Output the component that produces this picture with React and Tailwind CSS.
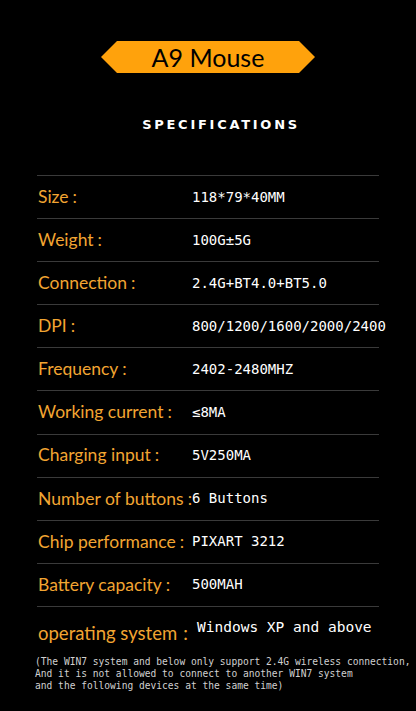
import React from 'react';

const specs = [
    { label: 'Size', value: '118*79*40MM' },
    { label: 'Weight', value: '100G±5G' },
    { label: 'Connection', value: '2.4G+BT4.0+BT5.0' },
    { label: 'DPI', value: '800/1200/1600/2000/2400' },
    { label: 'Frequency', value: '2402-2480MHZ' },
    { label: 'Working current', value: '≤8MA' },
    { label: 'Charging input', value: '5V250MA' },
    { label: 'Number of buttons', value: '6 Buttons' },
    { label: 'Chip performance', value: 'PIXART 3212' },
    { label: 'Battery capacity', value: '500MAH' },
];

export default function App() {
    return (
        <div className="w-[416px] h-[711px] bg-black overflow-hidden">
            <div className="pt-[41px] flex justify-center">
                <div className="w-[214px] h-[32px] bg-[#ffa20c] flex items-center justify-center [clip-path:polygon(16px_0,198px_0,100%_50%,198px_100%,16px_100%,0_50%)]">
                    <span className="text-[25px] leading-none text-black font-['Lato',sans-serif]">A9 Mouse</span>
                </div>
            </div>

            <h2 className="mt-[45px] text-center text-[13px] font-bold text-white tracking-[0.21em] leading-none pl-[26px] font-['DejaVu_Sans',sans-serif]">
                SPECIFICATIONS
            </h2>

            <div className="mt-[44px] mx-[37px] border-t border-[#3a3a3a]">
                {specs.map(s => (
                    <div key={s.label} className="h-[43.1px] flex items-center border-b border-[#3a3a3a]">
                        <div className="w-[155px] shrink-0 pl-[1px] text-[17.5px] text-[#f2a532] whitespace-nowrap font-['Lato',sans-serif]">
                            {s.label}<span className="ml-[4px]">:</span>
                        </div>
                        <div className="text-[14px] text-white whitespace-nowrap font-['DejaVu_Sans_Mono',monospace]">
                            {s.value}
                        </div>
                    </div>
                ))}
                <div className="h-[48px] flex">
                    <div className="w-[160px] shrink-0 pl-[1px] pt-[13px] text-[18.5px] text-[#f2a532] whitespace-nowrap font-['Lato',sans-serif]">
                        operating system<span className="ml-[6px]">:</span>
                    </div>
                    <div className="pt-[10px] text-[14.5px] text-white whitespace-nowrap font-['DejaVu_Sans_Mono',monospace]">
                        Windows XP and above
                    </div>
                </div>
            </div>

            <div className="ml-[35px] mt-[1px] text-[9.6px] leading-[12px] text-[#d0d0d0] whitespace-pre font-['DejaVu_Sans_Mono',monospace]">
                {'(The WIN7 system and below only support 2.4G wireless connection,\nAnd it is not allowed to connect to another WIN7 system\nand the following devices at the same time)'}
            </div>
        </div>
    );
}
